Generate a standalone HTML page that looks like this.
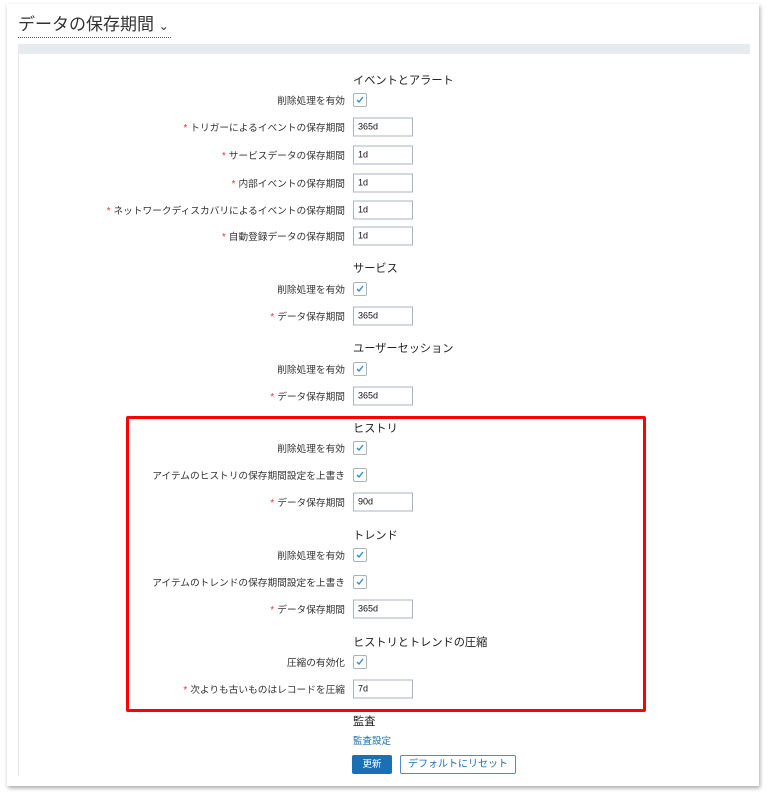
<!DOCTYPE html>
<html><head><meta charset="utf-8"><style>
body{margin:0;width:768px;height:796px;background:#fff;position:relative;font-family:"Liberation Sans","Noto Sans CJK JP",sans-serif;color:#1f2c33;overflow:hidden}
.card{position:absolute;left:7px;top:4px;width:752px;height:782px;background:#fff;box-shadow:1px 2px 4px rgba(0,0,0,.35)}
.title{position:absolute;left:18px;top:14px;font-size:17px;color:#333;border-bottom:1px dotted #555;line-height:22px;padding-right:2px}
.bar{position:absolute;left:18px;top:44px;width:732px;height:10px;background:#e8ebed}
.vl{position:absolute;left:18px;top:54px;width:1px;height:722px;background:#e6e6e6}
.h{position:absolute;left:353px;font-size:11.2px;color:#222;transform:translateY(-50%)}
.l{position:absolute;right:423px;font-size:9.7px;color:#333;transform:translateY(-50%);white-space:nowrap}
.l i{color:#e33;font-style:normal;margin-right:3px}
.cb{position:absolute;left:353px;width:12px;height:12px;border:1px solid #aab4bb;border-radius:2px;transform:translateY(-50%)}
.cb svg{position:absolute;left:1px;top:1px}
.in{position:absolute;left:353px;width:54px;height:17px;border:1px solid #aab4bb;font-size:9px;line-height:17px;padding-left:4px;transform:translateY(-50%);color:#111}
.red{position:absolute;left:126px;top:416px;width:514px;height:290px;border:3px solid #f00;border-radius:2px}
</style></head><body>
<div class="card"></div>
<div class="title">データの保存期間 <span style="font-size:12px">⌄</span></div>
<div class="bar"></div><div class="vl"></div>

<div class="h" style="top:80px">イベントとアラート</div>
<div class="l" style="top:100px">削除処理を有効</div><div class="cb" style="top:100px"><svg width="10" height="10"><path d="M2 5l2 2 4-5" fill="none" stroke="#2a8bd0" stroke-width="1.3"/></svg></div>
<div class="l" style="top:127px"><i>*</i>トリガーによるイベントの保存期間</div><div class="in" style="top:127px">365d</div>
<div class="l" style="top:155px"><i>*</i>サービスデータの保存期間</div><div class="in" style="top:155px">1d</div>
<div class="l" style="top:183px"><i>*</i>内部イベントの保存期間</div><div class="in" style="top:183px">1d</div>
<div class="l" style="top:210px"><i>*</i>ネットワークディスカバリによるイベントの保存期間</div><div class="in" style="top:210px">1d</div>
<div class="l" style="top:236px"><i>*</i>自動登録データの保存期間</div><div class="in" style="top:236px">1d</div>

<div class="h" style="top:268px">サービス</div>
<div class="l" style="top:289px">削除処理を有効</div><div class="cb" style="top:289px"><svg width="10" height="10"><path d="M2 5l2 2 4-5" fill="none" stroke="#2a8bd0" stroke-width="1.3"/></svg></div>
<div class="l" style="top:316px"><i>*</i>データ保存期間</div><div class="in" style="top:316px">365d</div>

<div class="h" style="top:348px">ユーザーセッション</div>
<div class="l" style="top:369px">削除処理を有効</div><div class="cb" style="top:369px"><svg width="10" height="10"><path d="M2 5l2 2 4-5" fill="none" stroke="#2a8bd0" stroke-width="1.3"/></svg></div>
<div class="l" style="top:396px"><i>*</i>データ保存期間</div><div class="in" style="top:396px">365d</div>

<div class="h" style="top:428px">ヒストリ</div>
<div class="l" style="top:448px">削除処理を有効</div><div class="cb" style="top:448px"><svg width="10" height="10"><path d="M2 5l2 2 4-5" fill="none" stroke="#2a8bd0" stroke-width="1.3"/></svg></div>
<div class="l" style="top:475px">アイテムのヒストリの保存期間設定を上書き</div><div class="cb" style="top:475px"><svg width="10" height="10"><path d="M2 5l2 2 4-5" fill="none" stroke="#2a8bd0" stroke-width="1.3"/></svg></div>
<div class="l" style="top:502px"><i>*</i>データ保存期間</div><div class="in" style="top:502px">90d</div>

<div class="h" style="top:535px">トレンド</div>
<div class="l" style="top:555px">削除処理を有効</div><div class="cb" style="top:555px"><svg width="10" height="10"><path d="M2 5l2 2 4-5" fill="none" stroke="#2a8bd0" stroke-width="1.3"/></svg></div>
<div class="l" style="top:582px">アイテムのトレンドの保存期間設定を上書き</div><div class="cb" style="top:582px"><svg width="10" height="10"><path d="M2 5l2 2 4-5" fill="none" stroke="#2a8bd0" stroke-width="1.3"/></svg></div>
<div class="l" style="top:609px"><i>*</i>データ保存期間</div><div class="in" style="top:609px">365d</div>

<div class="h" style="top:642px">ヒストリとトレンドの圧縮</div>
<div class="l" style="top:662px">圧縮の有効化</div><div class="cb" style="top:662px"><svg width="10" height="10"><path d="M2 5l2 2 4-5" fill="none" stroke="#2a8bd0" stroke-width="1.3"/></svg></div>
<div class="l" style="top:689px"><i>*</i>次よりも古いものはレコードを圧縮</div><div class="in" style="top:689px">7d</div>

<div class="red"></div>

<div class="h" style="top:721px">監査</div>
<div class="h" style="top:740px;font-size:9.5px;color:#1a6fb5">監査設定</div>
<div style="position:absolute;left:352px;top:755px;width:40px;height:19px;background:#1a6fb5;color:#fff;font-size:9.5px;line-height:19px;text-align:center;border-radius:2px">更新</div>
<div style="position:absolute;left:400px;top:755px;width:114px;height:17px;border:1px solid #4a8fc9;color:#1a6fb5;font-size:10px;line-height:17px;text-align:center;border-radius:2px">デフォルトにリセット</div>
</body></html>
